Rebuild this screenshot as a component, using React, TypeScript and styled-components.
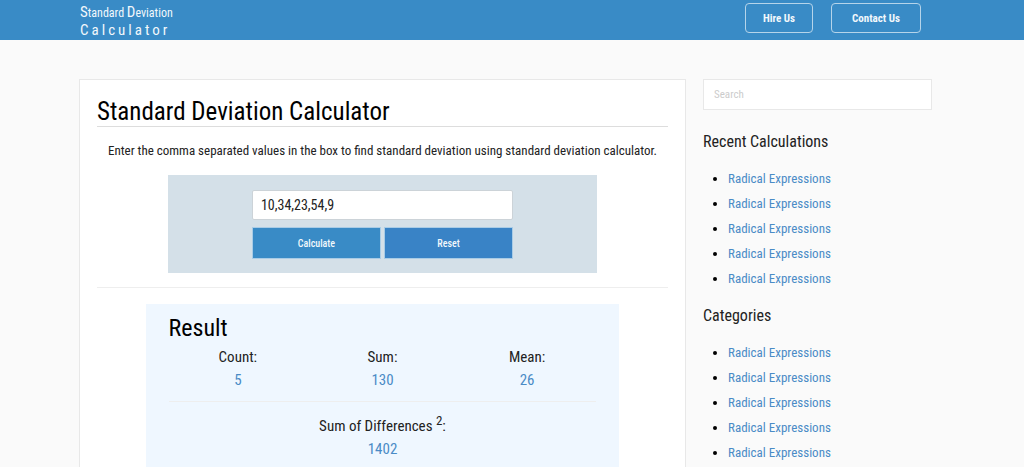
import React, { useState } from "react";
import styled, { createGlobalStyle } from "styled-components";

const GlobalStyle = createGlobalStyle`
  *, *::before, *::after { box-sizing: border-box; }
  body {
    margin: 0;
    background: #fafafa;
    color: #222;
    font-family: "Roboto Condensed", "Liberation Sans Narrow", Roboto, sans-serif;
    font-size: 13px;
    line-height: 20px;
  }
  input, button { font-family: inherit; }
  a { color: #4a8bc6; text-decoration: none; }
`;

const Header = styled.header`
  display: flex;
  justify-content: space-between;
  min-height: 40px;
  padding: 3px 103px 0 80px;
  background: #398bc6;
  color: #fff;
`;

const Logo = styled.a`
  display: block;
  padding-top: 1px;
  color: #f2f8fc;
  font-size: 12px;
  line-height: 17px;
`;

const Initial = styled.span`
  font-size: 15px;
`;

const LogoSecond = styled.span`
  display: block;
  font-size: 15px;
  letter-spacing: 3px;
`;

const HeaderNav = styled.nav`
  display: flex;
  align-items: flex-start;
  gap: 18px;
`;

const HeaderLink = styled.a<{ $pad: number }>`
  padding: 2px ${(p) => p.$pad}px 0;
  border: 1px solid #b5d4ea;
  border-radius: 4px;
  color: #f2f8fc;
  font-size: 11px;
  font-weight: 700;
  line-height: 26px;
`;

const Page = styled.div`
  display: grid;
  grid-template-columns: minmax(0, 1fr) 229px;
  gap: 17px;
  align-items: start;
  padding: 39px 92px 40px 79px;
`;

const Card = styled.main`
  padding: 17px;
  border: 1px solid #e8e8e8;
  background: #fff;
`;

const Title = styled.h1`
  margin: 0;
  border-bottom: 1px solid #ddd;
  color: #000;
  font-size: 25px;
  font-weight: 400;
  line-height: 29px;
`;

const Intro = styled.p`
  margin: 14px 0;
  text-align: center;
`;

const Form = styled.form`
  display: flex;
  justify-content: center;
  width: 75%;
  margin: 0 auto;
  padding: 15px 0 14px;
  background: #d4e0e8;
`;

const Fields = styled.div`
  display: grid;
  grid-template-columns: 1fr 1fr;
  gap: 7px 3px;
  width: 61%;
`;

const ValuesInput = styled.input`
  grid-column: 1 / -1;
  width: 100%;
  height: 30px;
  padding: 0 8px;
  border: 1px solid #ccd3d8;
  border-radius: 2px;
  background: #fff;
  color: #222;
  font-size: 14px;
`;

const FormButton = styled.button<{ $color: string }>`
  height: 32px;
  padding: 0;
  border: 1px solid #a9cce6;
  background: ${(p) => p.$color};
  color: #f2f8fc;
  font-size: 10px;
  font-weight: 500;
`;

const Divider = styled.hr<{ $compact?: boolean }>`
  margin: ${(p) => (p.$compact ? "9px 0 13px" : "14px 0 16px")};
  border: 0;
  border-top: 1px solid #eee;
`;

const Result = styled.section`
  width: 83%;
  margin: 0 auto;
  padding: 10px 23px 24px;
  background: #eff7ff;
  color: #222;
  font-size: 15px;
  line-height: 23px;
`;

const ResultTitle = styled.h2`
  margin: 0 0 4px;
  color: #000;
  font-size: 24px;
  font-weight: 400;
  line-height: 28px;
`;

const Stats = styled.div`
  display: flex;
  margin: 0 -3px;
`;

const Stat = styled.div`
  flex: 1;
  text-align: center;
`;

const Value = styled.div`
  color: #4a8bc6;
`;

const Power = styled.sup`
  font-size: 13px;
  line-height: 0;
`;

const Search = styled.input`
  display: block;
  width: 100%;
  height: 31px;
  padding: 0 10px;
  border: 1px solid #e8e8e8;
  background: #fff;
  color: #222;
  font-size: 11px;
  &::placeholder { color: #ccc; opacity: 1; }
`;

const Sidebar = styled.aside`
  display: grid;
  gap: 14px;
`;

const SideTitle = styled.h2`
  margin: 0 0 13px;
  color: #222;
  font-size: 16px;
  font-weight: 400;
  line-height: 22px;
`;

const SideGroup = styled.section<{ $first?: boolean }>`
  padding-top: ${(p) => (p.$first ? 7 : 0)}px;
`;

const SideList = styled.ul`
  margin: 0;
  padding-left: 25px;
  color: #000;
  line-height: 25px;
`;

const links = [1, 2, 3, 4, 5];

function LinkGroup({ title, first }: { title: string; first?: boolean }) {
  return (
    <SideGroup $first={first}>
      <SideTitle>{title}</SideTitle>
      <SideList>
        {links.map((id) => (
          <li key={id}>
            <a href="#radical">Radical Expressions</a>
          </li>
        ))}
      </SideList>
    </SideGroup>
  );
}

export default function App() {
  const [values, setValues] = useState("10,34,23,54,9");
  return (
    <>
      <GlobalStyle />
      <Header>
        <Logo href="#home">
          <Initial>S</Initial>tandard <Initial>D</Initial>eviation
          <LogoSecond>Calculator</LogoSecond>
        </Logo>
        <HeaderNav>
          <HeaderLink href="#hire" $pad={17}>Hire Us</HeaderLink>
          <HeaderLink href="#contact" $pad={20}>Contact Us</HeaderLink>
        </HeaderNav>
      </Header>
      <Page>
        <Card>
          <Title>Standard Deviation Calculator</Title>
          <Intro>
            Enter the comma separated values in the box to find standard deviation using standard deviation calculator.
          </Intro>
          <Form onSubmit={(e) => e.preventDefault()}>
            <Fields>
              <ValuesInput
                aria-label="Comma separated values"
                value={values}
                onChange={(e) => setValues(e.target.value)}
              />
              <FormButton type="submit" $color="#398bc6">Calculate</FormButton>
              <FormButton type="button" $color="#3983c6" onClick={() => setValues("")}>Reset</FormButton>
            </Fields>
          </Form>
          <Divider />
          <Result>
            <ResultTitle>Result</ResultTitle>
            <Stats>
              <Stat>Count:<Value>5</Value></Stat>
              <Stat>Sum:<Value>130</Value></Stat>
              <Stat>Mean:<Value>26</Value></Stat>
            </Stats>
            <Divider $compact />
            <Stat>
              Sum of Differences <Power>2</Power>:
              <Value>1402</Value>
            </Stat>
          </Result>
        </Card>
        <Sidebar>
          <Search type="search" placeholder="Search" aria-label="Search" />
          <LinkGroup title="Recent Calculations" first />
          <LinkGroup title="Categories" />
        </Sidebar>
      </Page>
    </>
  );
}
